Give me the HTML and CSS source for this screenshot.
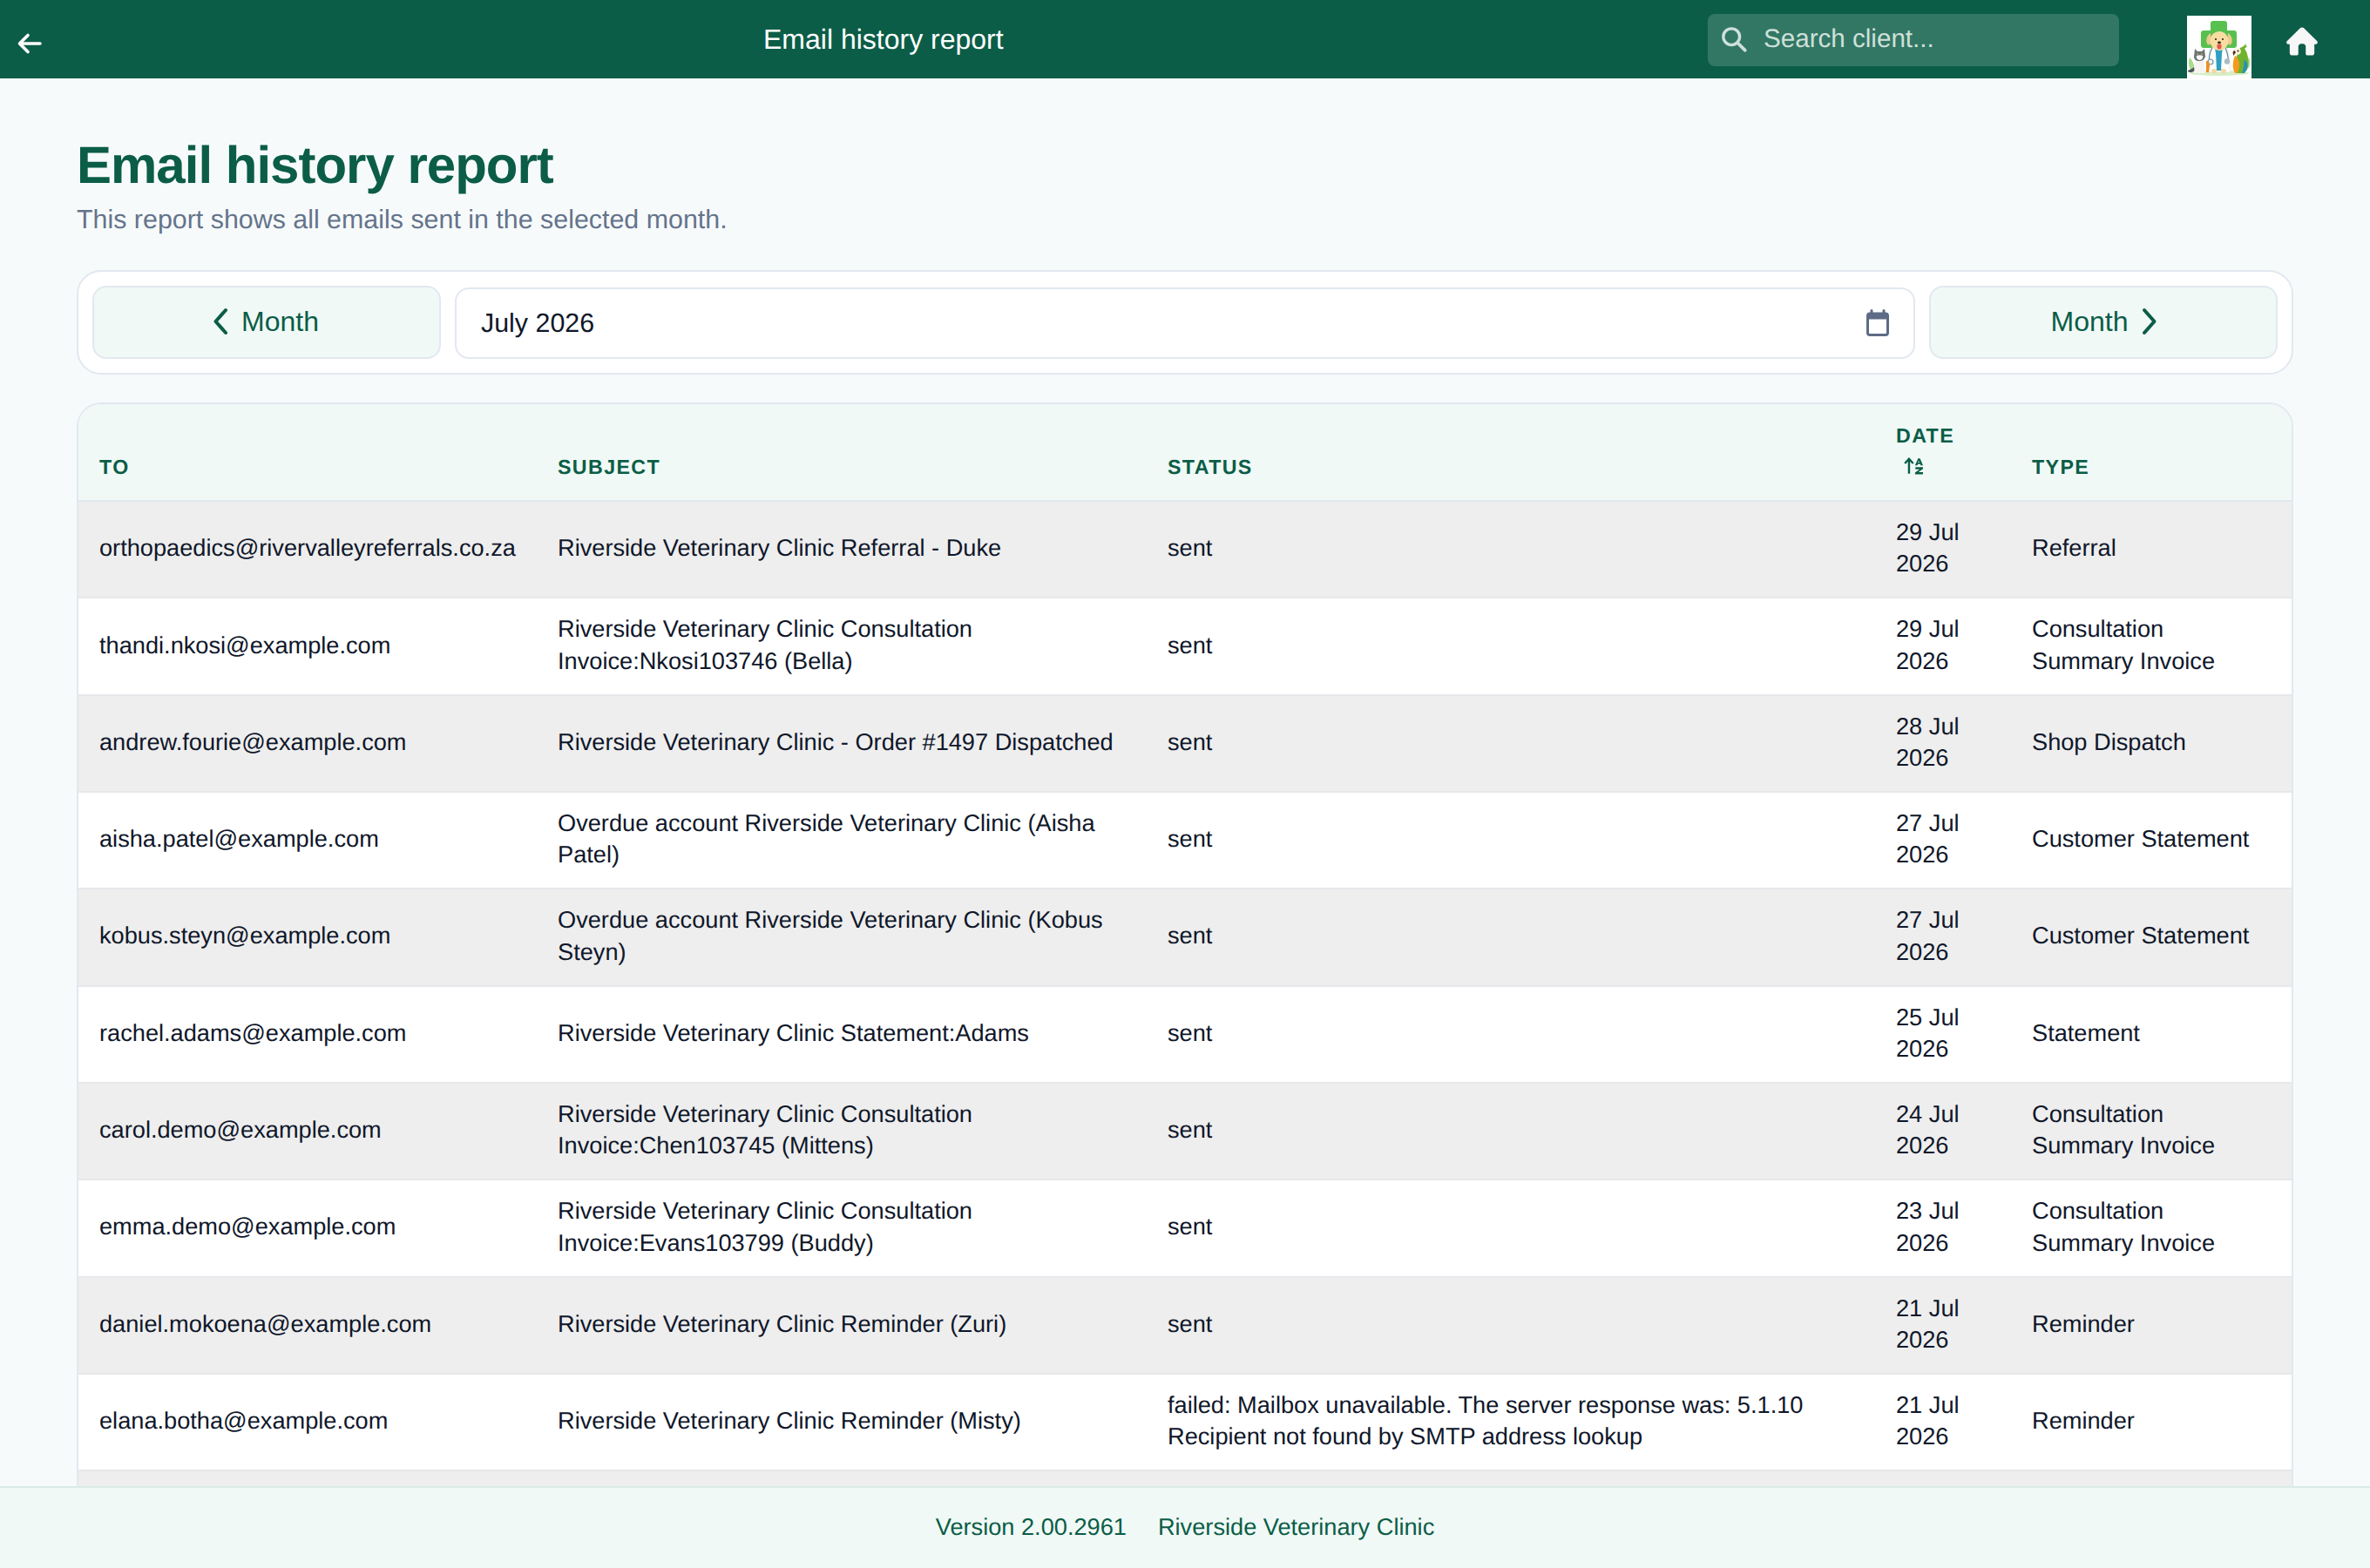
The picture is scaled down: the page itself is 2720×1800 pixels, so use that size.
FILE: index.html
```html
<!DOCTYPE html>
<html lang="en">
<head>
<meta charset="utf-8">
<title>Email history report</title>
<link rel="stylesheet" href="styles.css">
</head>
<body>
<div class="app">
  <header class="topbar">
    <button class="back" aria-label="Back">
      <svg viewBox="0 0 32 32" class="back-icon"><path d="M28 16H5M14 6.5 4.5 16l9.5 9.5" fill="none" stroke="#fff" stroke-width="3.6" stroke-linecap="round" stroke-linejoin="round"/></svg>
    </button>
    <div class="topbar-title">Email history report</div>
    <div class="search">
      <svg viewBox="0 0 32 32" class="search-icon"><circle cx="13" cy="13" r="10" fill="none" stroke="#cfe0da" stroke-width="3.6"/><path d="M20.5 20.500 29.500 29.500" stroke="#cfe0da" stroke-width="4" stroke-linecap="round"/></svg>
      <span class="search-text">Search client...</span>
    </div>
    <svg class="logo" viewBox="0 0 74 74">
      <rect width="74" height="74" fill="#fff"/>
      <path d="M30 6h13a3 3 0 0 1 3 3v8h8a3 3 0 0 1 3 3v14a3 3 0 0 1-3 3H19a3 3 0 0 1-3-3V20a3 3 0 0 1 3-3h8V9a3 3 0 0 1 3-3z" fill="#58c04f"/>
      <ellipse cx="37" cy="66" rx="34" ry="3" fill="#d5eec5"/>
      <path d="M4 62c-3-6-2-11-1-14 3 3 6 8 5 14zM71 60c2-5 1-9 0-12-3 3-4 7-4 12z" fill="#a8dc8e"/>
      <path d="M26 38c3-2 18-2 21 0l3 27H23z" fill="#fdfdfb" stroke="#d8dee0" stroke-width=".6"/>
      <path d="M32 38h9l-1 5-1 20h-5l-1-20z" fill="#2f9fc4"/>
      <path d="M29 37c-4 6-4 13-2 18M44 37c2 5 4 10 3 15" fill="none" stroke="#4d7f93" stroke-width="1.1"/>
      <circle cx="27" cy="53" r="3" fill="#eef3f5" stroke="#6f95a5" stroke-width="1.2"/>
      <circle cx="46" cy="52.500" r="3.200" fill="#a9bcc4"/>
      <path d="M27 20c-4 2-6 8-4 12 2 3 4 1 5-2zM47 20c4 2 6 8 4 12-2 3-4 1-5-2z" fill="#eccb8c"/>
      <ellipse cx="37" cy="29" rx="10.500" ry="11" fill="#f8dca2"/>
      <circle cx="33" cy="27" r="1.100" fill="#3a2518"/><circle cx="41" cy="27" r="1.100" fill="#3a2518"/>
      <ellipse cx="37" cy="31" rx="2" ry="1.400" fill="#3a2518"/>
      <path d="M34.500 33h5v3a2.500 2.500 0 0 1-5 0z" fill="#e4574f"/>
      <path d="M29 66c-2-3-1-5 2-5h3v5zM39 66v-5h3c3 0 4 2 2 5z" fill="#f6d9a4"/>
      <g transform="translate(-3 4)">
        <path d="M11 55c-3 3-7 3-7 5 2 2 6 1 8-1z" fill="#50585c"/>
        <path d="M13 45h9l2 17H11z" fill="#f5f4f0"/>
        <path d="M12 34l3 3h5l3-3 1 9c-1 3-3 5-7 5s-6-2-6-5z" fill="#6b7377"/>
        <path d="M14 42c2-1 5-1 7 0 1 2-1 5-3.500 5S13 44 14 42z" fill="#fbfaf6"/>
        <circle cx="15" cy="40" r=".9" fill="#c9a437"/><circle cx="20" cy="40" r=".9" fill="#c9a437"/>
      </g>
      <path d="M22 52c2-1 4 2 4 5l-1 8h-3z" fill="#ef8b24"/>
      <g transform="translate(3 4)">
        <path d="M58 33c3-1 5-3 7-5-1 2 0 3 1 3l-3 3c4 4 6 18 3 24l-4 4h-8c-3-4-3-12 0-19 1-3 2-8 4-10z" fill="#6fb32e"/>
        <path d="M52 42c3 1 6 7 5 13l-2 7h-3c-3-5-3-13 0-20z" fill="#f39a1d"/>
        <path d="M62 46l4 4c1 4 0 8-3 12h-3c2-5 3-11 2-16z" fill="#2c8fba"/>
        <circle cx="55" cy="37" r="3.800" fill="#fbf5dc"/><circle cx="55.500" cy="36.500" r="1" fill="#2a1c12"/>
        <path d="M52 36c-3 0-3 4-1 6 0-2 1-3 2-3z" fill="#5b2d17"/>
      </g>
    </svg>
    <button class="home" aria-label="Home">
      <svg viewBox="0 0 40 36" class="home-icon"><path d="M20 1.500c.9 0 1.700.4 2.300 1l16 15.800c1.300 1.300.4 3.700-1.500 3.700H35v10.500c0 1.900-1.300 3-3 3h-5.500a2 2 0 0 1-2-2V25c0-2-1.500-3.500-3.500-3.500h-2c-2 0-3.500 1.500-3.500 3.500v8.500a2 2 0 0 1-2 2H8c-1.700 0-3-1.100-3-3V22H3.200c-1.900 0-2.800-2.400-1.500-3.700l16-15.800c.6-.6 1.400-1 2.300-1z" fill="#f7f7f7"/></svg>
    </button>
  </header>

  <main class="main">
    <h1 class="page-title">Email history report</h1>
    <p class="page-sub">This report shows all emails sent in the selected month.</p>

    <section class="month-card">
      <button class="month-btn month-prev">
        <svg viewBox="0 0 20 32" class="chev"><path d="M16 3 4.500 16 16 29" fill="none" stroke="#0b5d47" stroke-width="4" stroke-linecap="round" stroke-linejoin="round"/></svg>
        <span>Month</span>
      </button>
      <div class="month-input">
        <span>July 2026</span>
        <svg viewBox="0 0 28 32" class="cal"><path d="M7 1.500v5M21 1.500v5" stroke="#5d6b85" stroke-width="3" stroke-linecap="round"/><rect x="2.500" y="5" width="23" height="24.500" rx="2.500" fill="#fff" stroke="#5d6b85" stroke-width="3"/><rect x="2.500" y="5" width="23" height="6.500" fill="#5d6b85"/></svg>
      </div>
      <button class="month-btn month-next">
        <span>Month</span>
        <svg viewBox="0 0 20 32" class="chev"><path d="M4 3l11.500 13L4 29" fill="none" stroke="#0b5d47" stroke-width="4" stroke-linecap="round" stroke-linejoin="round"/></svg>
      </button>
    </section>

    <section class="table-card">
      <table class="report">
        <colgroup><col class="c-to"><col class="c-subject"><col class="c-status"><col class="c-date"><col class="c-type"></colgroup>
        <thead>
          <tr>
            <th>To</th>
            <th>Subject</th>
            <th>Status</th>
            <th>Date<br><svg viewBox="0 0 30 24" class="sort"><path d="M8 22V3M2.500 8.500 8 2.500l5.500 6" fill="none" stroke="#0b5d47" stroke-width="2.800"/><path d="M16 11l4-9h2.500l4 9h-3l-.6-1.700h-3.300l-.6 1.700zM19.800 7.400h1.900l-.9-2.700zM16.500 13.500h10v2.300l-6 4.400h6V23h-10.500v-2.300l6-4.400h-5.500z" fill="#0b5d47"/></svg></th>
            <th>Type</th>
          </tr>
        </thead>
        <tbody>
          <tr><td>orthopaedics@rivervalleyreferrals.co.za</td><td>Riverside Veterinary Clinic Referral - Duke</td><td>sent</td><td>29 Jul 2026</td><td>Referral</td></tr>
          <tr><td>thandi.nkosi@example.com</td><td>Riverside Veterinary Clinic Consultation Invoice:Nkosi103746 (Bella)</td><td>sent</td><td>29 Jul 2026</td><td>Consultation Summary Invoice</td></tr>
          <tr><td>andrew.fourie@example.com</td><td>Riverside Veterinary Clinic - Order #1497 Dispatched</td><td>sent</td><td>28 Jul 2026</td><td>Shop Dispatch</td></tr>
          <tr><td>aisha.patel@example.com</td><td>Overdue account Riverside Veterinary Clinic (Aisha Patel)</td><td>sent</td><td>27 Jul 2026</td><td>Customer Statement</td></tr>
          <tr><td>kobus.steyn@example.com</td><td>Overdue account Riverside Veterinary Clinic (Kobus Steyn)</td><td>sent</td><td>27 Jul 2026</td><td>Customer Statement</td></tr>
          <tr><td>rachel.adams@example.com</td><td>Riverside Veterinary Clinic Statement:Adams</td><td>sent</td><td>25 Jul 2026</td><td>Statement</td></tr>
          <tr><td>carol.demo@example.com</td><td>Riverside Veterinary Clinic Consultation Invoice:Chen103745 (Mittens)</td><td>sent</td><td>24 Jul 2026</td><td>Consultation Summary Invoice</td></tr>
          <tr><td>emma.demo@example.com</td><td>Riverside Veterinary Clinic Consultation Invoice:Evans103799 (Buddy)</td><td>sent</td><td>23 Jul 2026</td><td>Consultation Summary Invoice</td></tr>
          <tr><td>daniel.mokoena@example.com</td><td>Riverside Veterinary Clinic Reminder (Zuri)</td><td>sent</td><td>21 Jul 2026</td><td>Reminder</td></tr>
          <tr><td>elana.botha@example.com</td><td>Riverside Veterinary Clinic Reminder (Misty)</td><td>failed: Mailbox unavailable. The server response was: 5.1.10 Recipient not found by SMTP address lookup</td><td>21 Jul 2026</td><td>Reminder</td></tr>
          <tr class="tail"><td></td><td></td><td></td><td></td><td></td></tr>
        </tbody>
      </table>
    </section>
  </main>

  <footer class="footer"><span>Version 2.00.2961</span><span>Riverside Veterinary Clinic</span></footer>
</div>
</body>
</html>
```
FILE: styles.css
```css
* { box-sizing: border-box; }
html, body { margin: 0; height: 100%; }
body {
  font-family: "Liberation Sans", Arial, sans-serif;
  color: #0f172a;
  background: #f7fafb;
  font-size: 27.2px;
  text-rendering: geometricPrecision;
}
button { font: inherit; background: none; border: 0; padding: 0; }
.app { height: 100vh; display: flex; flex-direction: column; overflow: hidden; }

.topbar {
  flex: none;
  height: 90px;
  background: #0b5d47;
  display: flex;
  align-items: flex-start;
  position: relative;
  z-index: 2;
}
.back { width: 68px; height: 100px; display: flex; padding: 34px 0 0 18px; }
.back-icon { width: 32px; height: 32px; }
.topbar-title {
  margin-left: 808px;
  width: 1084px;
  color: #fff;
  font-size: 32px;
  line-height: 90px;
}
.search {
  width: 472px;
  height: 60px;
  margin-top: 16px;
  border-radius: 8px;
  background: rgba(255,255,255,.16);
  display: flex;
  align-items: center;
  padding-left: 15px;
  padding-bottom: 3px;
  gap: 19px;
}
.search-icon { width: 30px; height: 30px; flex: none; }
.search-text { color: #cfe0da; font-size: 29.6px; }
.logo { width: 74px; height: 74px; margin: 18px 0 0 78px; flex: none; }
.home { margin: 30px 0 0 38px; width: 40px; height: 34px; display: flex; }
.home-icon { width: 40px; height: 34px; }

.main { flex: 1; min-height: 0; overflow: hidden; padding: 0 88px; }
.page-title {
  margin: 64px 0 0;
  font-size: 60px;
  line-height: 72px;
  font-weight: 700;
  letter-spacing: -1px;
  color: #0b5d47;
}
.page-sub {
  margin: 6px 0 0;
  font-size: 30.4px;
  line-height: 40px;
  color: #64748b;
}

.month-card {
  margin-top: 38px;
  height: 120px;
  background: #fff;
  border: 2px solid #e2e8f0;
  border-radius: 28px;
  padding: 16px;
  display: flex;
  align-items: flex-start;
  gap: 16px;
}
.month-btn {
  flex: none;
  width: 400px;
  height: 84px;
  background: #f0f9f6;
  border: 2px solid #e2e8f0;
  border-radius: 16px;
  color: #0b5d47;
  font-size: 32px;
  display: flex;
  align-items: center;
  justify-content: center;
  gap: 14px;
  padding-bottom: 2px;
}
.month-prev { padding-right: 3px; }
.month-next { padding-left: 3px; gap: 15px; }
.chev { width: 20px; height: 32px; }
.month-input {
  flex: 1;
  height: 82px;
  margin-top: 2px;
  background: #fff;
  border: 2px solid #e2e8f0;
  border-radius: 16px;
  display: flex;
  align-items: center;
  justify-content: space-between;
  padding: 0 27px 0 28px;
  font-size: 30.4px;
}
.cal { width: 28px; height: 32px; }

.table-card {
  margin-top: 32px;
  background: #fff;
  border: 2px solid #e2e8f0;
  border-radius: 28px;
  overflow: hidden;
}
.report { width: 100%; border-collapse: collapse; table-layout: fixed; }
.c-to { width: 526px; }
.c-subject { width: 700px; }
.c-status { width: 836px; }
.c-date { width: 156px; }
.report th {
  background: #f0f9f6;
  color: #0b5d47;
  font-size: 23.2px;
  line-height: 36px;
  letter-spacing: 1.4px;
  text-transform: uppercase;
  text-align: left;
  font-weight: 700;
  vertical-align: bottom;
  padding: 18px 24px 20px;
  border-bottom: 2px solid #e2e8f0;
}
.sort { width: 26px; height: 22px; margin-left: 8px; vertical-align: -2px; }
.report td {
  font-size: 27.2px;
  line-height: 36.4px;
  padding: 17px 24px 19.5px;
  border-bottom: 2px solid #e6e8eb;
}
.report tbody tr:nth-child(odd) td { background: #eeeeee; }
.report .tail td { height: 110px; }

.footer {
  flex: none;
  height: 94px;
  background: #f0f9f6;
  border-top: 2px solid #d9ece5;
  color: #0b5d47;
  font-size: 27.2px;
  display: flex;
  align-items: center;
  justify-content: center;
  gap: 36px;
  padding-bottom: 3px;
}
```
